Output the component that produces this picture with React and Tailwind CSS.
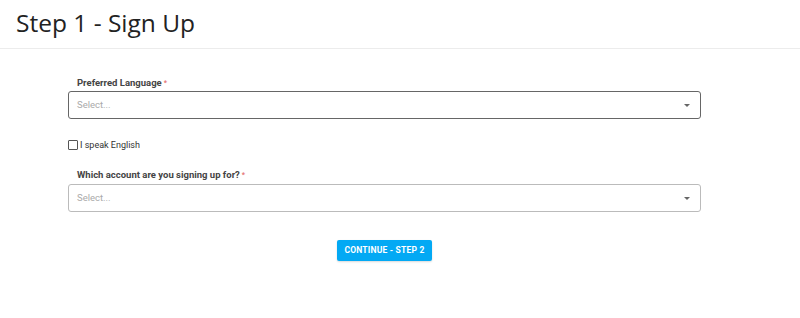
export default function App() {
  return (
    <div className="w-[800px] h-[318px] bg-white font-['Roboto',sans-serif]">
      <div className="h-[49px] border-b border-[#ececec] pl-4 pt-[6px]">
        <h1 className="font-['Open_Sans',sans-serif] text-[24.5px] leading-[34px] text-[#222]">
          Step 1 - Sign Up
        </h1>
      </div>

      <div className="w-[633px] ml-[68px] pt-[28px]">
        {/* Preferred language */}
        <label className="block pl-[9px] text-[9.5px] font-bold text-[#444] leading-[12px]">
          Preferred Language<span className="text-[#e57373] ml-[2px] text-[7px] align-top">*</span>
        </label>
        <div className="mt-[2px] h-[28px] border border-[#666] rounded-[3px] flex items-center justify-between pl-[8px] pr-[10px]">
          <span className="text-[9.5px] text-[#aaa]">Select...</span>
          <span className="w-0 h-0 border-l-[3px] border-r-[3px] border-t-[3px] border-l-transparent border-r-transparent border-t-[#666]" />
        </div>

        {/* Checkbox */}
        <label className="mt-[20px] flex items-center gap-[2px]">
          <span className="w-[10px] h-[10px] border border-[#555] rounded-[1px] bg-white" />
          <span className="text-[9px] text-[#333] leading-[12px]">I speak English</span>
        </label>

        {/* Account */}
        <label className="mt-[18px] block pl-[9px] text-[9.5px] font-bold text-[#444] leading-[12px]">
          Which account are you signing up for?<span className="text-[#e57373] ml-[2px] text-[7px] align-top">*</span>
        </label>
        <div className="mt-[3px] h-[28px] border border-[#bbb] rounded-[3px] flex items-center justify-between pl-[8px] pr-[10px]">
          <span className="text-[9.5px] text-[#aaa]">Select...</span>
          <span className="w-0 h-0 border-l-[3px] border-r-[3px] border-t-[3px] border-l-transparent border-r-transparent border-t-[#666]" />
        </div>

        <div className="flex justify-center mt-[28px]">
          <button className="h-[21px] w-[95px] bg-[#03a9f4] rounded-[2px] text-white text-[8.5px] font-bold tracking-[0.2px] shadow-[0_1px_2px_rgba(0,0,0,0.15)]">
            CONTINUE - STEP 2
          </button>
        </div>
      </div>
    </div>
  );
}
